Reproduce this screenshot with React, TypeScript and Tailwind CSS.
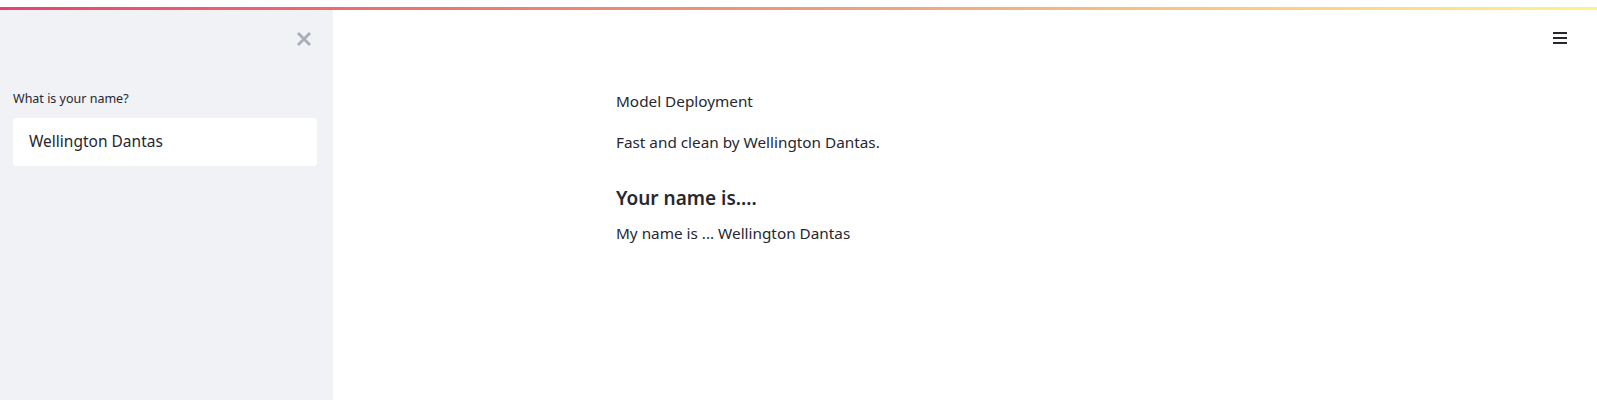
export default function App() {
  return (
    <div
      className="relative h-[400px] w-[1597px] overflow-hidden bg-white text-[#262730]"
      style={{ fontFamily: '"Noto Sans", "Open Sans", sans-serif' }}
    >
      {/* decoration bar */}
      <div className="h-[7px] bg-white" />
      <div className="h-[3px] bg-gradient-to-r from-[#e8416a] via-[#ef9a7c] to-[#fff38a]" />

      <div className="flex h-[390px]">
        <aside className="flex w-[333px] shrink-0 flex-col bg-[#f0f2f6] px-[13px]">
          <div className="flex justify-end pr-[9px] pt-[22px]">
            <svg width="14" height="14" viewBox="0 0 14 14" className="text-[#a9adb8]">
              <path d="M2 2 L12 12 M12 2 L2 12" stroke="currentColor" strokeWidth="2.8" strokeLinecap="square" />
            </svg>
          </div>
          <label className="mt-[45px] text-[12.5px] leading-[16px]">What is your name?</label>
          <div className="mt-[11px] flex h-[48px] w-[304px] items-center rounded-[4px] bg-white px-[16px] text-[15.5px]">
            Wellington Dantas
          </div>
        </aside>

        <main className="relative flex-1">
          <button className="absolute right-[30px] top-[22px] flex h-[12px] w-[14px] flex-col justify-between">
            <span className="block h-[2px] w-full bg-[#262730]" />
            <span className="block h-[2px] w-full bg-[#262730]" />
            <span className="block h-[2px] w-full bg-[#262730]" />
          </button>
          <div className="mx-auto w-[730px] px-[16px] pt-[79px] text-[15.3px]">
            <p className="leading-[24px]">Model Deployment</p>
            <p className="mt-[17px] leading-[24px]">Fast and clean by Wellington Dantas.</p>
            <h3 className="mt-[29px] text-[19px] font-semibold leading-[30px]">Your name is....</h3>
            <p className="mt-[8px] leading-[24px]">My name is ... Wellington Dantas</p>
          </div>
        </main>
      </div>
    </div>
  );
}
